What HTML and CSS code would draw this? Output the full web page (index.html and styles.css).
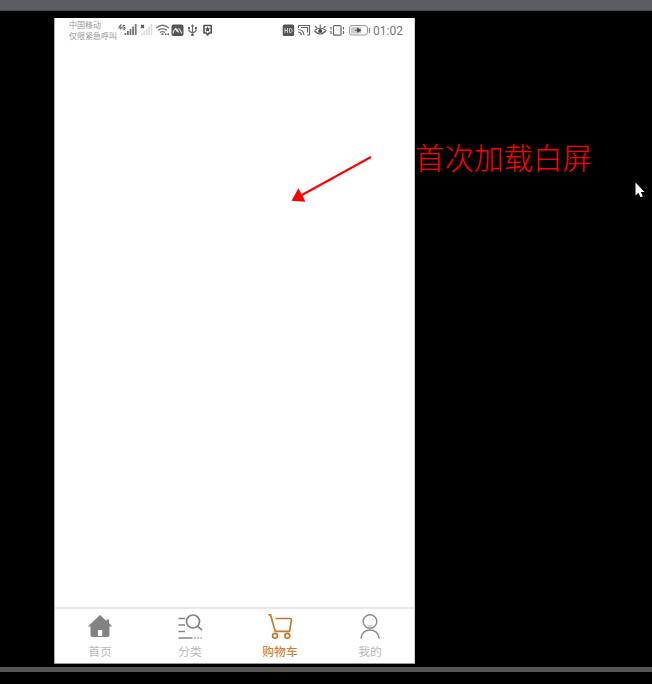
FILE: index.html
```html
<!DOCTYPE html>
<html lang="zh-CN">
<head>
<meta charset="utf-8">
<title>购物车</title>
<link rel="stylesheet" href="styles.css">
</head>
<body>
<div class="top-strip"></div>
<main class="stage">
  <section class="phone">
    <header class="status">
      <div class="carrier"><span>中国移动</span><span>仅限紧急呼叫</span></div>
      <svg class="left-icons" width="96" height="24" viewBox="117 18 96 24">
        <g stroke="#606060" stroke-width="1" fill="none">
          <path d="M120.800 24.500v5M118.500 28h3.300M120.800 24.500l-2.200 3.300M125 25.500h-2v3.500h2v-1.500h-1"/>
        </g>
        <path fill="#777" d="M124.500 33h1.800v2h-1.800zM127 31h1.800v4H127zM129.600 29h1.800v6h-1.800zM132.200 26.500h1.800V35h-1.800zM134.800 24h1.800v11h-1.800z"/>
        <path stroke="#444" stroke-width="1.300" d="M141 25l3 3M144 25l-3 3"/>
        <path fill="#ddd" d="M141 33h1.700v2H141zM143.400 31h1.700v4h-1.700zM145.800 29h1.700v6h-1.700zM148.200 26.500h1.700V35h-1.700zM150.600 24h1.700v11h-1.700z"/>
        <g fill="none" stroke="#777" stroke-width="1.300">
          <path d="M156 28q6.500-5.500 13 0M158 30.500q4.500-3.700 9 0M160 32.600q2.500-2 5 0"/>
        </g>
        <path fill="#555" d="M161.500 33.500h2v1.500h-2zM165 33.500h1.500V35H165zM167.500 33.500h1.500V35h-1.500z"/>
        <rect x="171.500" y="24.500" width="12" height="11.500" rx="2" fill="#555"/>
        <path d="M173.300 33.500v-2l2.200-3 2 3.500M176.500 28.500l2.200 4M178.300 29h1.200l2.300 4.500" fill="none" stroke="#ddd" stroke-width="1.200"/>
        <g fill="none" stroke="#666" stroke-width="1.100"><path d="M192.500 25v10M189 28v3l3.500 2 3.500-2v-3"/></g>
        <path fill="#666" d="M190.800 26.500l1.700-2.500 1.700 2.500zM191.200 34h2.600v2h-2.600zM188 27h2v2h-2zM195 27h2v2h-2z"/>
        <path d="M204 25.500h7.200v7.500H209l-1.400 2-1.400-2H204z" fill="#fff" stroke="#505050" stroke-width="1.600" stroke-linejoin="round"/>
        <path d="M207.600 26.500l.8 1.800 2 .2-1.500 1.300.4 2-1.700-1-1.700 1 .4-2-1.500-1.300 2-.2z" fill="#505050"/>
      </svg>
      <svg class="right-icons" width="90" height="24" viewBox="282 18 90 24">
        <rect x="282.700" y="24.500" width="11.500" height="11.500" rx="1.500" fill="#555"/>
        <path d="M285 28v5M285 30.500h2.500M287.500 28v5M289.500 28.500v4h1.200q1.500-.2 1.500-2t-1.500-2z" stroke="#ccc" stroke-width="1" fill="none"/>
        <g fill="none" stroke="#666" stroke-width="1.200">
          <path d="M298.500 28v-2.500h11V35H307M298 29.500q5.500 0 6 5.500M298 32q3 0 3.500 3M301 27.500h6.500v5"/>
          <path d="M314.500 30.500q5.700-4.500 11.400 0-5.700 7-11.400 0M315 26l2 2M320.200 24.500V28M325.500 26l-2 2"/>
          <rect x="333.500" y="25.600" width="7.500" height="9.600" rx="1"/>
          <path d="M331 27v2.500M331 31v3M343.500 27v2.500M343.500 31v3"/>
        </g>
        <circle cx="320.200" cy="31" r="2" fill="#444"/>
        <rect x="349.500" y="25.500" width="18" height="9.500" rx="2.500" fill="#fff" stroke="#999"/>
        <rect x="351" y="27" width="10" height="6.500" rx="1" fill="#ccc"/>
        <path d="M355 30.300h5M357.500 28.300l3.500 2-3.500 2z" stroke="#444" stroke-width=".8" fill="#444"/>
        <path d="M369.500 28v5" stroke="#888" stroke-width="1.300"/>
      </svg>
      <time class="clock">01:02</time>
    </header>
    <div class="content"></div>
    <nav class="tabs">
      <a class="tab">
        <svg width="30" height="30" viewBox="0 0 30 30"><path d="M15 2L2.800 13.400h2.700V22q0 2 2 2h15q2 0 2-2v-8.600h2.700L24 10V6.500h-2.500V8z" fill="#858283"/><path d="M13 17h4.200v6H13z" fill="#fff"/></svg>
        <span>首页</span>
      </a>
      <a class="tab">
        <svg width="30" height="30" viewBox="0 0 30 30" fill="none" stroke="#858283" stroke-width="1.700"><path d="M3.500 5.500H10M3.500 12H10M3.500 18.500H10M3.500 25h14"/><circle cx="18" cy="8.500" r="6.500"/><path d="M22.600 13.200l4.400 4"/><path d="M19 25h8" stroke-dasharray="2 1.200" stroke="#aaa"/></svg>
        <span>分类</span>
      </a>
      <a class="tab active">
        <svg width="30" height="30" viewBox="0 0 30 30" fill="none" stroke="#c9792c" stroke-width="1.700" stroke-linejoin="round"><path d="M3.500 1.800h2l4.700 16.500h14.300L26.500 7q0-1.500-1.500-1.500H10.500"/><circle cx="10" cy="22.800" r="2.400"/><circle cx="22.300" cy="22.800" r="2.400"/></svg>
        <span>购物车</span>
      </a>
      <a class="tab">
        <svg width="30" height="30" viewBox="0 0 30 30" fill="none" stroke="#8e8e8e" stroke-width="1.500"><circle cx="15" cy="8.500" r="6.800"/><path d="M5.800 25.500C6.500 14.200 23.500 14.200 24.200 25.500"/><path d="M12.500 12.500q2.500 1 5 0" stroke="#ccc"/></svg>
        <span>我的</span>
      </a>
    </nav>
  </section>
  <p class="note">首次加载白屏</p>
</main>
<div class="bottom-strip"></div>
<svg class="arrow" width="86" height="50" viewBox="288 154 86 50"><path d="M371 157L301 195.500" stroke="#f00" stroke-width="2"/><path d="M291.500 200.800L298.500 188.200L305.500 201.800z" fill="#f00"/></svg>
<svg class="cursor" width="12" height="18" viewBox="634 181 12 18"><path d="M635.500 182.500v13l3-2.700 2 4.400 2.300-1-2-4.200h3.700z" fill="#fff"/></svg>
</body>
</html>
```
FILE: styles.css
```css
* { box-sizing: border-box; }
body {
  margin: 0;
  height: 684px;
  overflow: hidden;
  background: #000;
  font-family: "Noto Sans CJK SC", sans-serif;
  display: flex;
  flex-direction: column;
}
.top-strip { height: 11px; background: #5b5c64; border-bottom: 1px solid #494a50; }
.stage { height: 656px; padding: 7px 0 3px 54px; display: flex; align-items: flex-start; }
.phone {
  width: 361px;
  height: 646px;
  background: #fff;
  border-left: 1px solid #aaa;
  border-right: 1px solid #ccc;
  border-bottom: 1px solid #999;
  display: flex;
  flex-direction: column;
  flex: none;
}
.status { height: 24px; display: flex; padding-left: 14px; }
.carrier {
  width: 48px;
  padding-top: 1px;
  display: flex;
  flex-direction: column;
  font-size: 8px;
  line-height: 11px;
  color: #999;
  white-space: nowrap;
}
.right-icons { margin-left: 69px; }
.clock { margin-left: 1px; font: 12px/26px Roboto, sans-serif; color: #777; }
.content { flex: 1; }
.tabs { height: 56px; margin-right: -1px; border-top: 2px solid #e8e8e8; display: flex; }
.tab {
  flex: 1;
  display: flex;
  flex-direction: column;
  align-items: center;
  padding-top: 4px;
  font-size: 11.800px;
  line-height: 16px;
  color: #bdb8ba;
}
.tab svg { flex: none; }
.active { color: #d38236; font-weight: 500; }
.note {
  margin: 118px 0 0;
  font-family: "Noto Sans CJK SC", sans-serif;
  font-size: 29.500px;
  font-weight: 300;
  line-height: 40px;
  color: #f00;
  white-space: nowrap;
}
.bottom-strip { height: 5px; background: #555; }
.arrow { position: absolute; left: 288px; top: 154px; }
.cursor { position: absolute; left: 634px; top: 181px; }
```
